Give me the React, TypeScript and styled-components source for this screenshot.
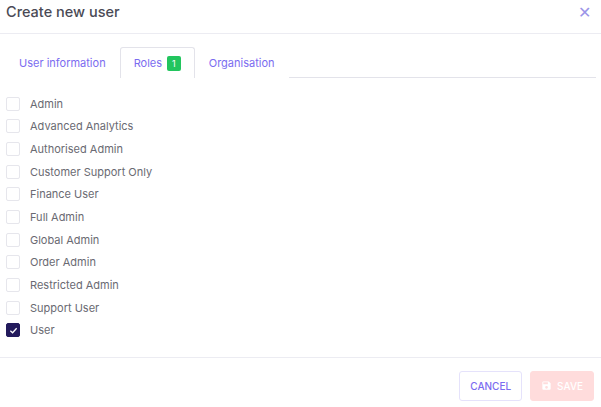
import React, { useState } from 'react';
import styled, { createGlobalStyle } from 'styled-components';

const Global = createGlobalStyle`
  body { margin: 0; font-family: Inter, "Noto Sans", sans-serif; background: #fff; }
`;

const Modal = styled.div`
  width: 601px;
  height: 407px;
  display: flex;
  flex-direction: column;
`;

const Header = styled.div`
  height: 34px;
  display: flex;
  align-items: center;
  justify-content: space-between;
  padding: 0 10px 0 6px;
  border-bottom: 1px solid #ececf2;
  box-sizing: border-box;
`;

const Title = styled.h1`
  margin: 0;
  font-size: 14.5px;
  font-weight: 500;
  color: #4a4a55;
  margin-top: -10px;
`;

const Close = styled.button`
  background: none;
  border: none;
  color: #9b94e8;
  font-size: 16px;
  cursor: pointer;
  padding: 0;
  margin-top: -8px;
`;

const Tabs = styled.div`
  display: flex;
  margin: 13px 5px 0;
  border-bottom: 1px solid #e3e3ea;
`;

const Tab = styled.button<{ $active?: boolean }>`
  height: 31px;
  padding: 0 13px;
  display: flex;
  align-items: center;
  gap: 5px;
  font-family: inherit;
  font-size: 11px;
  color: #7b6cf0;
  background: #fff;
  border: 1px solid ${p => (p.$active ? '#e3e3ea' : 'transparent')};
  border-bottom: none;
  border-radius: 3px 3px 0 0;
  margin-bottom: -1px;
  cursor: pointer;
`;

const Badge = styled.span`
  background: #22c55e;
  color: #fff;
  font-size: 9px;
  padding: 2px 5px;
  border-radius: 2px;
`;

const List = styled.div`
  flex: 1;
  display: flex;
  flex-direction: column;
  gap: 9.7px;
  padding: 19px 6px 0;
`;

const Row = styled.label`
  display: flex;
  align-items: center;
  gap: 10px;
  font-size: 11px;
  color: #6a6a72;
  height: 13px;
  cursor: pointer;
`;

const Box = styled.span<{ $checked?: boolean }>`
  width: 12px;
  height: 12px;
  border: 1px solid ${p => (p.$checked ? '#231a5c' : '#e6e6ec')};
  background: ${p => (p.$checked ? '#231a5c' : '#fff')};
  border-radius: 2px;
  display: flex;
  align-items: center;
  justify-content: center;
`;

const Footer = styled.div`
  height: 50px;
  border-top: 1px solid #ececf2;
  display: flex;
  justify-content: flex-end;
  align-items: center;
  gap: 8px;
  padding: 0 7px 0 0;
  box-sizing: border-box;
`;

const Button = styled.button<{ $primary?: boolean }>`
  height: 30px;
  padding: 0 10px;
  font-family: inherit;
  font-size: 10px;
  font-weight: 500;
  border-radius: 3px;
  display: flex;
  align-items: center;
  gap: 5px;
  border: 1px solid ${p => (p.$primary ? '#ffdcdc' : '#e5e2fb')};
  background: ${p => (p.$primary ? '#ffdcdc' : '#fff')};
  color: ${p => (p.$primary ? '#fff' : '#7b6cf0')};
  margin-top: 6px;
`;

const roles = [
  'Admin', 'Advanced Analytics', 'Authorised Admin', 'Customer Support Only', 'Finance User',
  'Full Admin', 'Global Admin', 'Order Admin', 'Restricted Admin', 'Support User', 'User',
];

export default function App() {
  const [checked, setChecked] = useState<string[]>(['User']);
  const toggle = (r: string) =>
    setChecked(c => (c.includes(r) ? c.filter(x => x !== r) : [...c, r]));

  return (
    <Modal>
      <Global />
      <Header>
        <Title>Create new user</Title>
        <Close>✕</Close>
      </Header>
      <Tabs>
        <Tab>User information</Tab>
        <Tab $active>Roles <Badge>{checked.length}</Badge></Tab>
        <Tab>Organisation</Tab>
      </Tabs>
      <List>
        {roles.map(r => (
          <Row key={r} onClick={() => toggle(r)}>
            <Box $checked={checked.includes(r)}>
              {checked.includes(r) && (
                <svg width="9" height="9" viewBox="0 0 10 10">
                  <path d="M1.5 5.2 L4 7.5 L8.5 2.5" stroke="#fff" strokeWidth="1.4" fill="none" />
                </svg>
              )}
            </Box>
            {r}
          </Row>
        ))}
      </List>
      <Footer>
        <Button>CANCEL</Button>
        <Button $primary>
          <svg width="11" height="11" viewBox="0 0 24 24" fill="#fff">
            <path d="M17 3H5a2 2 0 0 0-2 2v14a2 2 0 0 0 2 2h14a2 2 0 0 0 2-2V7l-4-4zm-5 16a3 3 0 1 1 0-6 3 3 0 0 1 0 6zm3-10H5V5h10v4z" />
          </svg>
          SAVE
        </Button>
      </Footer>
    </Modal>
  );
}
